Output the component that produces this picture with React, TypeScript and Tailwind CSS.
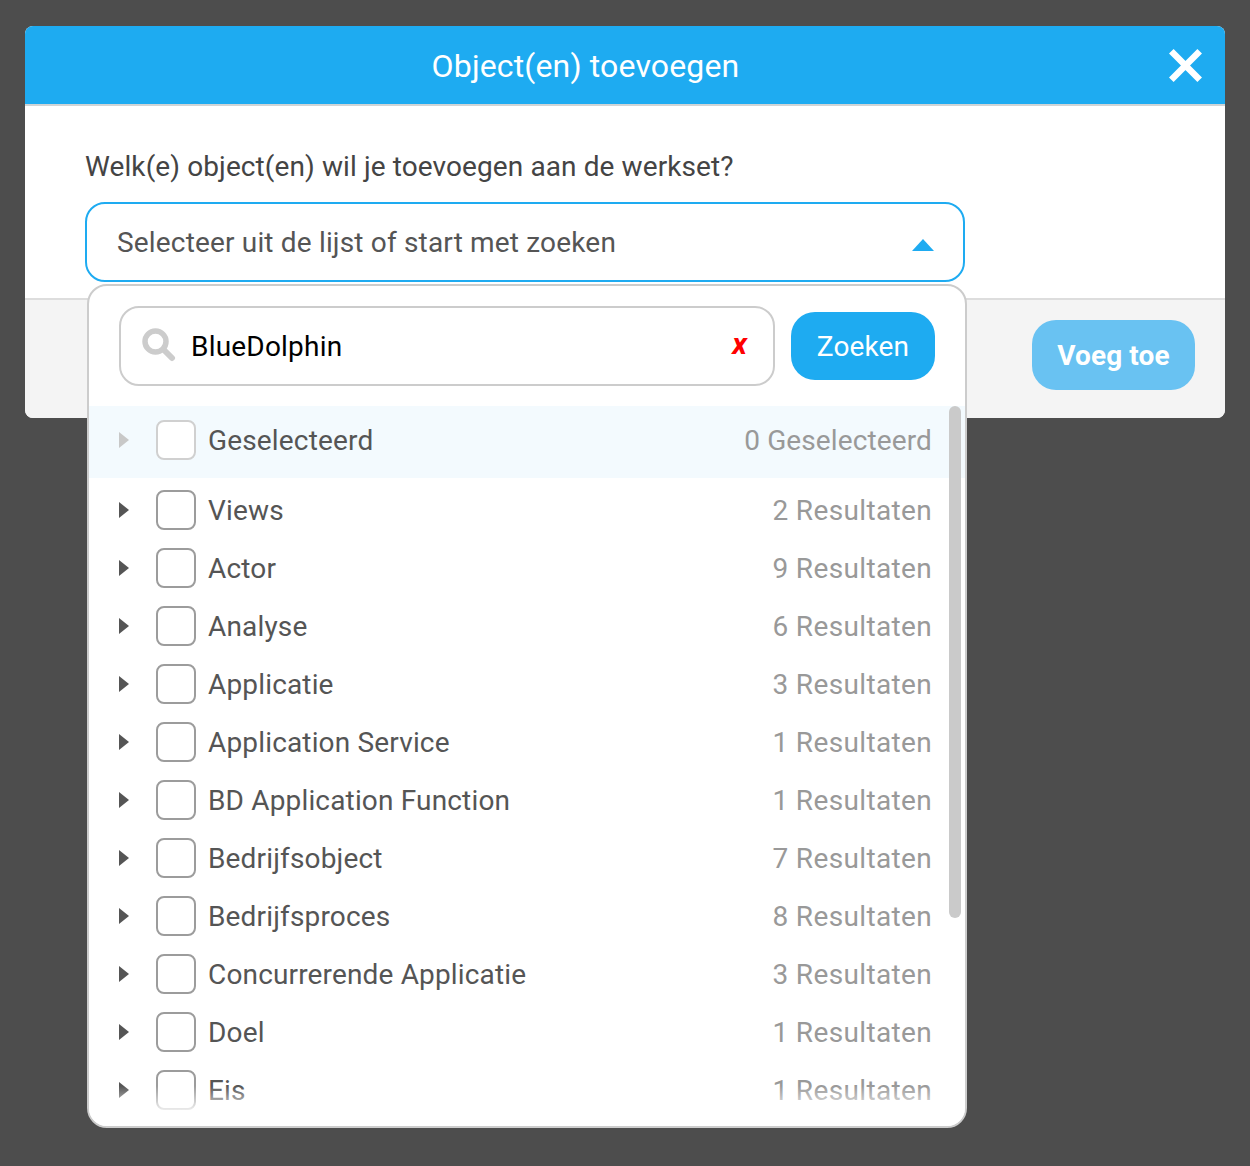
const rows = [
  { name: "Views", count: 2 },
  { name: "Actor", count: 9 },
  { name: "Analyse", count: 6 },
  { name: "Applicatie", count: 3 },
  { name: "Application Service", count: 1 },
  { name: "BD Application Function", count: 1 },
  { name: "Bedrijfsobject", count: 7 },
  { name: "Bedrijfsproces", count: 8 },
  { name: "Concurrerende Applicatie", count: 3 },
  { name: "Doel", count: 1 },
  { name: "Eis", count: 1 },
];

function Caret({ light }: { light?: boolean }) {
  return (
    <svg width="10" height="16" viewBox="0 0 10 16" className="shrink-0">
      <path d="M0 0 L10 8 L0 16 Z" fill={light ? "#c8c8c8" : "#555555"} />
    </svg>
  );
}

function Row({ label, right, selected }: { label: string; right: string; selected?: boolean }) {
  return (
    <div className={selected ? "flex h-[72px] items-center bg-[#f3fafe] pb-[4px] pl-[30px] pr-[33px]" : "flex h-[58px] items-center pl-[30px] pr-[33px]"}>
      <Caret light={selected} />
      <div className={selected ? "ml-[27px] h-10 w-10 shrink-0 rounded-lg border-2 border-[#d0d0d0] bg-white" : "ml-[27px] h-10 w-10 shrink-0 rounded-lg border-2 border-[#9c9c9c] bg-white"} />
      <span className="ml-3 pt-[2px] text-[28px] tracking-[0.16px] text-[#555555]">{label}</span>
      <span className={selected ? "ml-auto pt-[2px] text-[28px] tracking-[0.12px] text-[#999999]" : "ml-auto pt-[2px] text-[28px] tracking-[0.35px] text-[#999999]"}>{right}</span>
    </div>
  );
}

export default function App() {
  return (
    <div className="min-h-[1166px] bg-[#4d4d4d] px-[25px] pt-[26px] font-['Roboto',sans-serif]">
      <div className="relative w-[1200px]">
        <div className="overflow-hidden rounded-lg bg-white">
          <div className="relative flex h-[80px] items-center justify-center border-b-2 border-[#cfd4d6] bg-[#1eabf1] pr-[79px] pt-[2px]">
            <span className="text-[32px] tracking-[0.15px] text-white">Object(en) toevoegen</span>
            <svg width="33" height="33" viewBox="0 0 33 33" className="absolute right-[23px] top-[23px]">
              <path d="M2.3 2.3 L30.7 30.7 M30.7 2.3 L2.3 30.7" stroke="#ffffff" strokeWidth="6.5" />
            </svg>
          </div>
          <div className="h-[192px] px-[60px] pt-[42px]">
            <div className="pt-[1px] text-[28px] leading-[35px] tracking-[0.1px] text-[#444444]">Welk(e) object(en) wil je toevoegen aan de werkset?</div>
            <div className="mt-[18px] flex h-[80px] w-[880px] items-center rounded-[20px] border-2 border-[#1eabf1] pl-[30px] pr-[29px]">
              <span className="pt-[2px] text-[28px] tracking-[0.17px] text-[#555555]">Selecteer uit de lijst of start met zoeken</span>
              <svg width="22" height="12" viewBox="0 0 22 12" className="ml-auto mt-[6px]">
                <path d="M11 0 L22 12 L0 12 Z" fill="#1eabf1" />
              </svg>
            </div>
          </div>
          <div className="flex h-[120px] items-start justify-end border-t-2 border-[#dddddd] bg-[#f4f4f4] pr-[30px] pt-[20px]">
            <button className="flex h-[70px] w-[163px] items-center justify-center rounded-[24px] bg-[#69c2f2] pt-[2px] text-[28px] font-bold tracking-[0.1px] text-white">Voeg toe</button>
          </div>
        </div>

        <div className="absolute left-[62px] top-[258px] h-[844px] w-[880px] overflow-hidden rounded-[20px] border-2 border-[#cccccc] bg-white">
          <div className="flex h-[120px] items-start pl-[30px] pt-[20px]">
            <div className="flex h-[80px] w-[656px] items-center rounded-[20px] border-2 border-[#cccccc] pl-[21px] pr-[26px]">
              <svg width="34" height="34" viewBox="0 0 34 34" className="mb-[2px] shrink-0">
                <circle cx="13.5" cy="13.5" r="10.5" fill="none" stroke="#cccccc" strokeWidth="5.5" />
                <path d="M21.5 21.5 L30 30" stroke="#cccccc" strokeWidth="6" strokeLinecap="round" />
              </svg>
              <span className="ml-[15px] pt-[2px] text-[28px] tracking-[0.2px] text-black">BlueDolphin</span>
              <span className="mb-[4px] ml-auto text-[30px] font-bold italic leading-none text-[#ff0000]">x</span>
            </div>
            <button className="ml-[16px] mt-[6px] flex h-[68px] w-[144px] items-center justify-center rounded-[24px] bg-[#1eabf1] pt-[2px] text-[28px] tracking-[0.12px] text-white">Zoeken</button>
          </div>
          <Row label="Geselecteerd" right="0 Geselecteerd" selected />
          <div className="mt-[3px]">
            {rows.map((r) => (
              <Row key={r.name} label={r.name} right={`${r.count} Resultaten`} />
            ))}
          </div>
          <div className="absolute right-[4px] top-[120px] h-[512px] w-[12px] rounded-md bg-[#cacaca]" />
          <div className="absolute bottom-0 left-0 right-0 h-[40px] bg-gradient-to-t from-white from-25% to-transparent" />
        </div>
      </div>
    </div>
  );
}
